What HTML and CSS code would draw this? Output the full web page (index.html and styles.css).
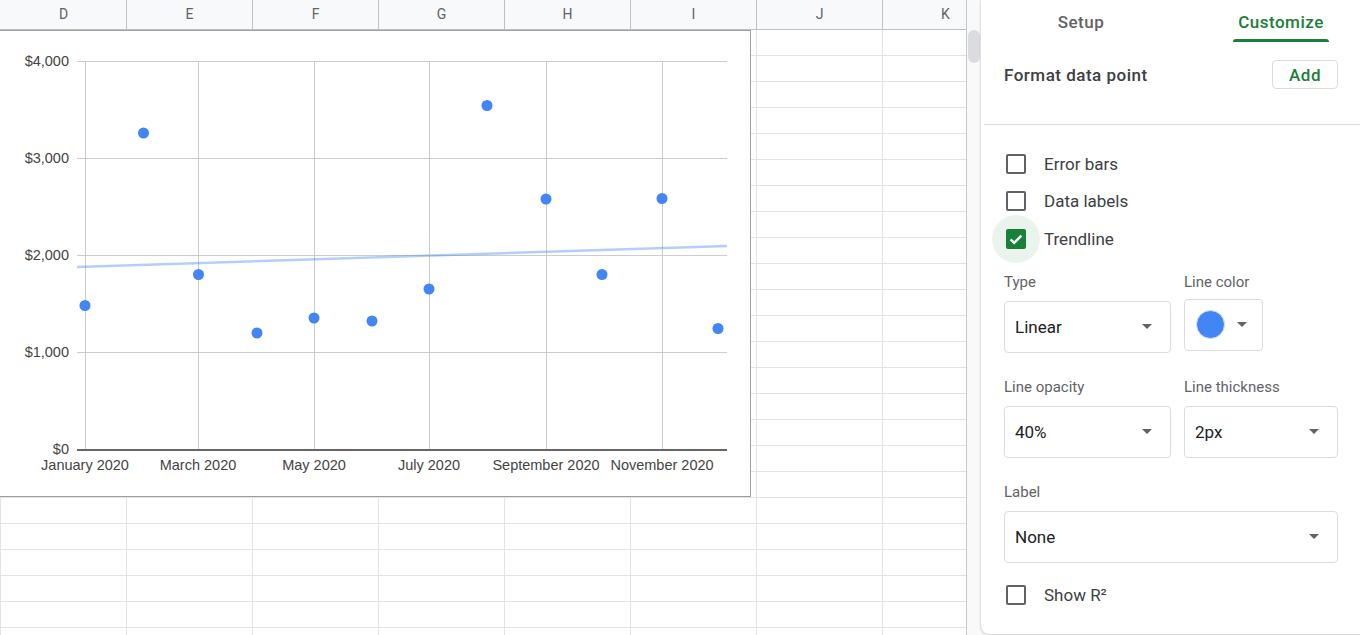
FILE: index.html
```html
<!DOCTYPE html>
<html lang="en">
<head>
<meta charset="utf-8">
<title>Chart editor</title>
<link rel="stylesheet" href="styles.css">
</head>
<body>
<div class="app">
  <div class="sheet">
    <div class="col-header">
      <div class="col">D</div><div class="col">E</div><div class="col">F</div><div class="col">G</div>
      <div class="col">H</div><div class="col">I</div><div class="col">J</div><div class="col">K</div>
    </div>
    <div class="grid">
      <div class="chart">
        <svg class="plot" width="750" height="465" viewBox="0 31 750 465" xmlns="http://www.w3.org/2000/svg">
          <g class="hgrid" stroke="#cccccc" stroke-width="1">
            <line x1="77" y1="61.5" x2="727" y2="61.5"/>
            <line x1="77" y1="158.5" x2="727" y2="158.5"/>
            <line x1="77" y1="255.5" x2="727" y2="255.5"/>
            <line x1="77" y1="352.5" x2="727" y2="352.5"/>
          </g>
          <g class="vgrid" stroke="#cccccc" stroke-width="1">
            <line x1="85.5" y1="61" x2="85.5" y2="449"/>
            <line x1="198.5" y1="61" x2="198.5" y2="449"/>
            <line x1="314.5" y1="61" x2="314.5" y2="449"/>
            <line x1="429.5" y1="61" x2="429.5" y2="449"/>
            <line x1="546.5" y1="61" x2="546.5" y2="449"/>
            <line x1="662.5" y1="61" x2="662.5" y2="449"/>
          </g>
          <line x1="77" y1="450" x2="727" y2="450" stroke="#666666" stroke-width="2"/>
          <line x1="77" y1="267" x2="727" y2="246" stroke="#4285f4" stroke-opacity="0.4" stroke-width="2.5"/>
          <g class="ylabels" font-family="'Liberation Sans', Arial, sans-serif" font-size="14.5" fill="#444444" text-anchor="end">
            <text x="69" y="66">$4,000</text>
            <text x="69" y="163">$3,000</text>
            <text x="69" y="260">$2,000</text>
            <text x="69" y="357">$1,000</text>
            <text x="69" y="454">$0</text>
          </g>
          <g class="xlabels" font-family="'Liberation Sans', Arial, sans-serif" font-size="14.5" fill="#444444" text-anchor="middle">
            <text x="85" y="470">January 2020</text>
            <text x="198" y="470">March 2020</text>
            <text x="314" y="470">May 2020</text>
            <text x="429" y="470">July 2020</text>
            <text x="546" y="470">September 2020</text>
            <text x="662" y="470">November 2020</text>
          </g>
          <g class="points" fill="#4285f4">
            <circle cx="85" cy="305.5" r="5.5"/>
            <circle cx="143.5" cy="133" r="5.5"/>
            <circle cx="198.5" cy="274.5" r="5.5"/>
            <circle cx="257" cy="333" r="5.5"/>
            <circle cx="314" cy="318" r="5.5"/>
            <circle cx="372" cy="321" r="5.5"/>
            <circle cx="429" cy="289" r="5.5"/>
            <circle cx="487" cy="105.5" r="5.5"/>
            <circle cx="546" cy="199" r="5.5"/>
            <circle cx="602" cy="274.5" r="5.5"/>
            <circle cx="662" cy="198.5" r="5.5"/>
            <circle cx="718" cy="328.5" r="5.5"/>
          </g>
        </svg>
      </div>
    </div>
  </div>

  <div class="vscroll">
    <div class="vs-head"></div>
    <div class="vs-track"><div class="vs-thumb"></div></div>
  </div>

  <div class="panel">
    <div class="tabs">
      <div class="tab">Setup</div>
      <div class="tab active">Customize</div>
    </div>

    <div class="section-head">
      <span class="section-title">Format data point</span>
      <button class="btn-add" type="button">Add</button>
    </div>

    <div class="divider"></div>

    <div class="body">
      <div class="checks">
        <label class="check"><span class="box"></span><span class="check-text">Error bars</span></label>
        <label class="check"><span class="box"></span><span class="check-text">Data labels</span></label>
        <label class="check"><span class="box checked"><svg width="16" height="16" viewBox="0 0 16 16"><path d="M2.6 8.4l3.6 3.5 7.2-7.3" fill="none" stroke="#ffffff" stroke-width="2.4"/></svg></span><span class="check-text">Trendline</span></label>
      </div>

      <div class="fields">
        <div class="field">
          <div class="field-label">Type</div>
          <div class="select"><span>Linear</span><span class="caret"></span></div>
        </div>
        <div class="field">
          <div class="field-label">Line color</div>
          <div class="select color-select"><span class="swatch"></span><span class="caret"></span></div>
        </div>
        <div class="field">
          <div class="field-label">Line opacity</div>
          <div class="select"><span>40%</span><span class="caret"></span></div>
        </div>
        <div class="field">
          <div class="field-label">Line thickness</div>
          <div class="select"><span>2px</span><span class="caret"></span></div>
        </div>
        <div class="field wide">
          <div class="field-label">Label</div>
          <div class="select"><span>None</span><span class="caret"></span></div>
        </div>
      </div>

      <label class="check r2"><span class="box"></span><span class="check-text">Show R²</span></label>
    </div>
  </div>
</div>
</body>
</html>
```

FILE: styles.css
```css
html, body {
  margin: 0;
  padding: 0;
  width: 1360px;
  height: 635px;
  overflow: hidden;
  background: #f8f9fa;
}

.app {
  display: flex;
  height: 635px;
  font-family: Roboto, "Noto Sans", Arial, sans-serif;
}

/* ---------- spreadsheet ---------- */
.sheet {
  width: 966px;
  flex: none;
  display: flex;
  flex-direction: column;
  overflow: hidden;
  background: #ffffff;
}

.col-header {
  display: flex;
  height: 29px;
  padding-left: 1px;
  border-bottom: 1px solid #c0c0c0;
  background: #f8f9fa;
  flex: none;
}

.col {
  width: 126px;
  flex: none;
  box-sizing: border-box;
  border-right: 1px solid #c0c0c0;
  text-align: center;
  line-height: 29px;
  font-family: Roboto, Arial, sans-serif;
  font-size: 14px;
  color: #5f6368;
}

.grid {
  position: relative;
  flex: 1;
  background-color: #ffffff;
  background-image:
    linear-gradient(to right, #e2e3e3 1px, transparent 1px),
    linear-gradient(to bottom, transparent 25px, #e2e3e3 25px);
  background-size: 126px 100%, 100% 26px;
  background-position: 0 0, 0 0;
}

.chart {
  position: absolute;
  left: -1px;
  top: 0;
  width: 750px;
  height: 465px;
  border: 1px solid #9e9e9e;
  background: #ffffff;
}

.plot {
  display: block;
}

/* ---------- vertical scrollbar ---------- */
.vscroll {
  width: 15px;
  flex: none;
  box-sizing: border-box;
  border-left: 1px solid #c8c8c8;
  display: flex;
  flex-direction: column;
  background: #ffffff;
}

.vs-head {
  height: 30px;
  background: #f8f9fa;
  flex: none;
}

.vs-track {
  flex: 1;
  padding-left: 1px;
  background: #f9f9f9;
}

.vs-thumb {
  width: 12px;
  height: 33px;
  border-radius: 6px;
  background: #dadce0;
}

/* ---------- side panel ---------- */
.panel {
  width: 400px;
  flex: none;
  height: 634px;
  background: #ffffff;
  border-radius: 0 0 0 8px;
  box-shadow: 0 0 2px rgba(60, 64, 67, 0.3), 0 1px 3px rgba(60, 64, 67, 0.15);
  position: relative;
  z-index: 1;
}

.tabs {
  display: flex;
  height: 42px;
}

.tab {
  width: 200px;
  flex: none;
  position: relative;
  box-sizing: border-box;
  padding-top: 12px;
  text-align: center;
  font-size: 17px;
  font-weight: 500;
  letter-spacing: 0.5px;
  line-height: 20px;
  color: #5f6368;
}

.tab.active {
  color: #188038;
}

.tab.active::after {
  content: "";
  position: absolute;
  left: 52px;
  bottom: 0;
  width: 96px;
  height: 3px;
  border-radius: 3px 3px 0 0;
  background: #188038;
}

.section-head {
  display: flex;
  align-items: center;
  justify-content: space-between;
  width: 334px;
  height: 29px;
  margin: 18px 0 0 23px;
}

.section-title {
  font-size: 17px;
  font-weight: 500;
  letter-spacing: 0.5px;
  color: #3c4043;
}

.btn-add {
  width: 66px;
  height: 29px;
  box-sizing: border-box;
  border: 1px solid #dadce0;
  border-radius: 4px;
  background: #ffffff;
  color: #188038;
  font-family: inherit;
  font-size: 17px;
  font-weight: 500;
  letter-spacing: 0.5px;
  padding: 0;
}

.divider {
  height: 1px;
  margin: 35px 0 0 3px;
  background: #dadce0;
}

.body {
  padding-left: 23px;
  width: 334px;
}

.checks {
  padding-top: 20px;
}

.check {
  display: flex;
  align-items: center;
  height: 37.5px;
}

.box {
  width: 20px;
  height: 20px;
  box-sizing: border-box;
  border: 2px solid #5f6368;
  border-radius: 2px;
  margin: 0 18px 0 2px;
  position: relative;
  display: flex;
  align-items: center;
  justify-content: center;
  flex: none;
}

.box.checked {
  background: #188038;
  border-color: #188038;
}

.box.checked::before {
  content: "";
  position: absolute;
  left: 50%;
  top: 50%;
  width: 48px;
  height: 48px;
  margin: -24px 0 0 -24px;
  border-radius: 50%;
  background: rgba(24, 128, 56, 0.09);
  z-index: -1;
}

.box svg {
  display: block;
}

.check-text {
  font-size: 17px;
  color: #3c4043;
}

.fields {
  display: grid;
  grid-template-columns: 167px 154px;
  column-gap: 13px;
  row-gap: 24px;
  margin-top: 14px;
}

.field {
  display: flex;
  flex-direction: column;
  align-items: flex-start;
  gap: 9px;
}

.field.wide {
  grid-column: 1 / 3;
}

.field-label {
  font-size: 15px;
  line-height: 20px;
  color: #5f6368;
}

.select {
  align-self: stretch;
  height: 52px;
  box-sizing: border-box;
  border: 1px solid #dadce0;
  border-radius: 4px;
  display: flex;
  align-items: center;
  justify-content: space-between;
  padding: 0 18px 0 10px;
  font-size: 17px;
  color: #202124;
}

.caret {
  width: 0;
  height: 0;
  border-left: 5px solid transparent;
  border-right: 5px solid transparent;
  border-top: 5px solid #5f6368;
}

.color-select {
  align-self: flex-start;
  width: 79px;
  padding: 0 15px 0 11px;
  margin-top: -2px;
}

.swatch {
  width: 29px;
  height: 29px;
  box-sizing: border-box;
  border-radius: 50%;
  background: #4285f4;
  border: 1px solid #d6e3fb;
}

.check.r2 {
  margin-top: 14px;
}
```
